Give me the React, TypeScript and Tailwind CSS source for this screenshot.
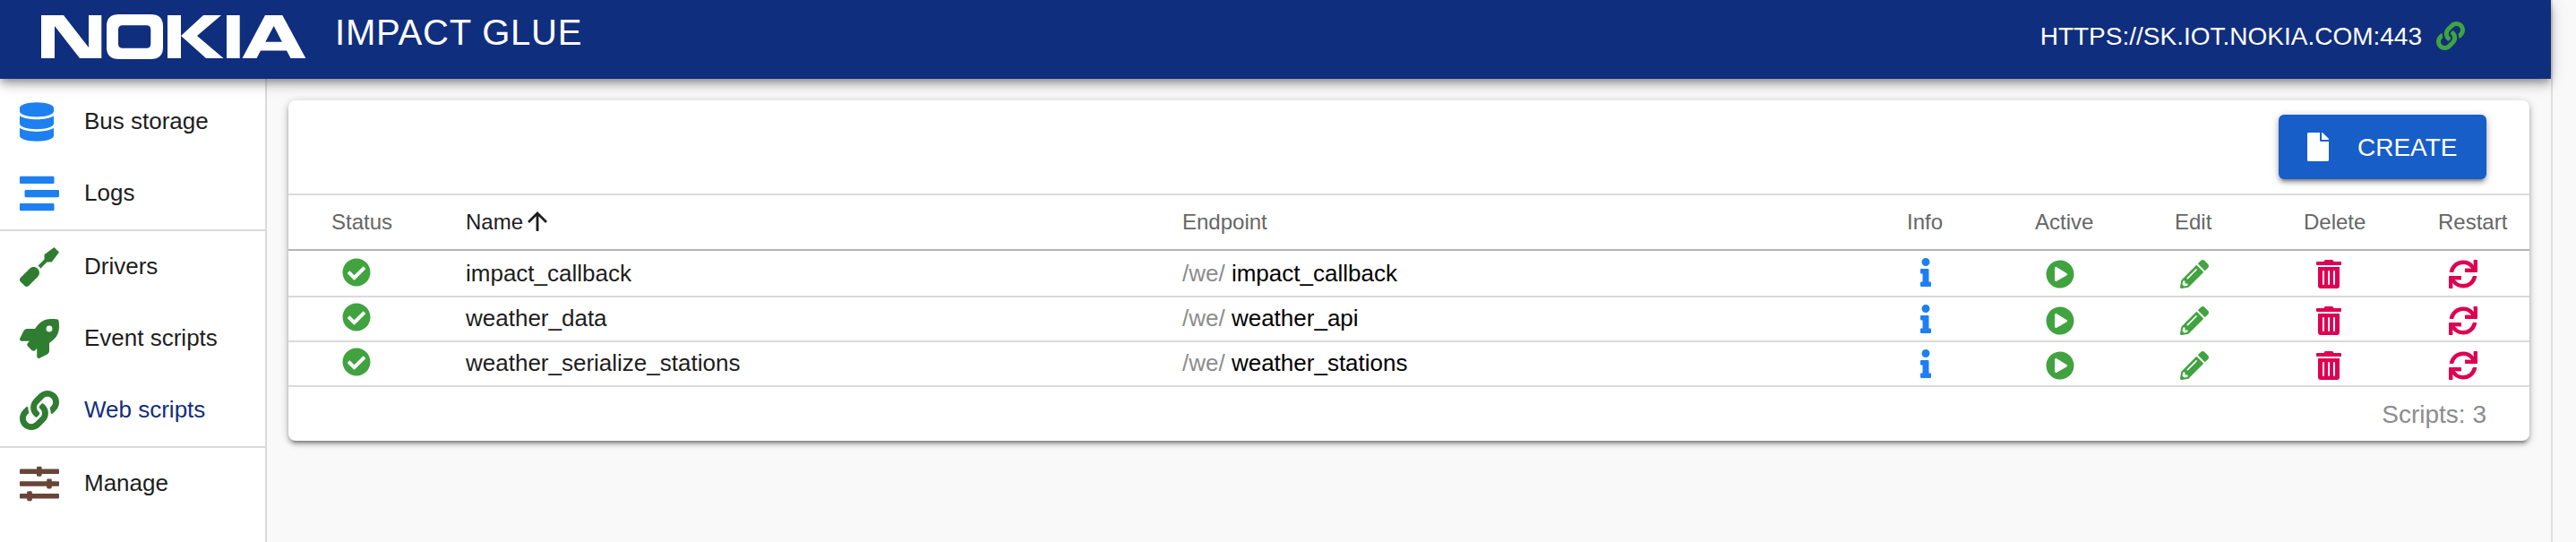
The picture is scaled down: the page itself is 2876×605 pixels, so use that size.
import { FaDatabase, FaStream, FaScrewdriver, FaRocket, FaLink, FaFile, FaCheckCircle, FaInfo, FaPlayCircle } from "react-icons/fa";

const pages = [
  [
    { label: "Bus storage", icon: FaDatabase, color: "text-[#1e80f0]", box: "w-[38px]" },
    { label: "Logs", icon: FaStream, color: "text-[#1e80f0]", box: "w-[44px]" },
  ],
  [
    { label: "Drivers", icon: FaScrewdriver, color: "text-[#2f7d30]", box: "w-[44px]" },
    { label: "Event scripts", icon: FaRocket, color: "text-[#2f7d30]", box: "w-[44px]" },
    { label: "Web scripts", icon: FaLink, color: "text-[#2f7d30]", box: "w-[44px]", active: true },
  ],
  [{ label: "Manage", icon: Sliders, color: "text-[#6a4438]", box: "w-[44px]" }],
];

const scripts = [
  { name: "impact_callback", endpoint: "impact_callback" },
  { name: "weather_data", endpoint: "weather_api" },
  { name: "weather_serialize_stations", endpoint: "weather_stations" },
];

function Sliders({ className }: { className?: string }) {
  return (
    <svg viewBox="0 0 44 44" fill="currentColor" className={className}>
      <rect x="0" y="5.5" width="44" height="5.5" rx="1" />
      <rect x="0" y="19.2" width="44" height="5.5" rx="1" />
      <rect x="0" y="33" width="44" height="5.5" rx="1" />
      <rect x="19" y="2.7" width="5.6" height="11" rx="1.4" />
      <rect x="30.2" y="16.4" width="5.6" height="11" rx="1.4" />
      <rect x="8.2" y="30.2" width="5.6" height="11" rx="1.4" />
    </svg>
  );
}

function Pencil() {
  return (
    <svg viewBox="0 0 512 512" fill="currentColor" className="size-8">
      <path d="M497.9 142.1l-46.1 46.1c-4.7 4.7-12.3 4.7-17 0l-111-111c-4.7-4.7-4.7-12.3 0-17l46.1-46.1c18.7-18.7 49.1-18.7 67.9 0l60.1 60.1c18.8 18.7 18.8 49.1 0 67.9zM284.2 99.8L21.6 362.4.4 483.9c-2.9 16.4 11.4 30.6 27.8 27.8l121.500-21.300 262.600-262.600c4.700-4.700 4.700-12.300 0-17l-111-111c-4.800-4.700-12.400-4.700-17.100 0zM124.100 339.900c-5.500-5.500-5.500-14.300 0-19.800l154-154c5.500-5.500 14.300-5.500 19.800 0s5.500 14.300 0 19.800l-154 154c-5.500 5.500-14.300 5.500-19.800 0zM88 424h48v36.300l-64.500 11.300-31.100-31.100L51.700 376H88v48z" />
    </svg>
  );
}

function Trash() {
  return (
    <svg viewBox="0 0 448 512" fill="currentColor" className="h-8 w-7">
      <path d="M32 464a48 48 0 0 0 48 48h288a48 48 0 0 0 48-48V128H32zm272-256a16 16 0 0 1 32 0v224a16 16 0 0 1-32 0zm-96 0a16 16 0 0 1 32 0v224a16 16 0 0 1-32 0zm-96 0a16 16 0 0 1 32 0v224a16 16 0 0 1-32 0zM432 32H312l-9.400-18.700A24 24 0 0 0 281.100 0H166.800a23.720 23.720 0 0 0-21.400 13.300L136 32H16A16 16 0 0 0 0 48v32a16 16 0 0 0 16 16h416a16 16 0 0 0 16-16V48a16 16 0 0 0-16-16z" />
    </svg>
  );
}

function Restart() {
  return (
    <svg viewBox="0 0 512 512" fill="currentColor" className="size-8">
      <path d="M440.650 12.570l4 82.770A247.160 247.160 0 0 0 255.830 8C134.730 8 33.910 94.920 12.290 209.820A12 12 0 0 0 24.090 224h49.050a12 12 0 0 0 11.670-9.260 175.910 175.910 0 0 1 317-56.940l-101.460-4.860a12 12 0 0 0-12.570 12v47.410a12 12 0 0 0 12 12H500a12 12 0 0 0 12-12V12a12 12 0 0 0-12-12h-47.370a12 12 0 0 0-11.980 12.570zM255.830 432a175.610 175.610 0 0 1-146-77.800l101.800 4.870a12 12 0 0 0 12.570-12v-47.400a12 12 0 0 0-12-12H12a12 12 0 0 0-12 12V500a12 12 0 0 0 12 12h47.350a12 12 0 0 0 12-12.600l-4.150-82.570A247.170 247.170 0 0 0 255.830 504c121.110 0 221.930-86.920 243.550-201.820a12 12 0 0 0-11.800-14.180h-49.050a12 12 0 0 0-11.670 9.260A175.860 175.860 0 0 1 255.830 432z" />
    </svg>
  );
}

function Logo() {
  return (
    <svg viewBox="0 0 296 50" fill="#fff" className="h-[50px] w-[296px]" role="img" aria-label="NOKIA">
      <path d="M0 1H25L53 37V1H67.300V49H43L15 13V49H0Z" />
      <path fillRule="evenodd" d="M87 0H122Q136 0 136 13V37Q136 50 122 50H87Q73 50 73 37V13Q73 0 87 0ZM91 12.300Q86 12.300 86 17V33Q86 37.700 91 37.700H117.500Q122.300 37.700 122.300 33V17Q122.300 12.300 117.500 12.300Z" />
      <path d="M141 1H156V49H141ZM181 1H201L174 24L203.500 49H184L156 24Z" />
      <path d="M207 1H221.700V49H207Z" />
      <path fillRule="evenodd" d="M250 1H269.300L295.300 49H278.500L274 40.600H245L240.500 49H224.500ZM259.700 13L250.300 30.700H268.900Z" />
    </svg>
  );
}

const columns = "grid grid-cols-[198px_800px_784px_150px_150px_150px_150px_120px]";

export default function App() {
  return (
    <div className="flex h-[605px] w-[2876px] overflow-hidden bg-[#f9f9f9] font-['Liberation_Sans',Arial,sans-serif] text-[#1d1d1d]">
      <div className="flex w-[2850px] flex-col border-r-2 border-[#e0e0e0]">
        <header className="relative z-10 flex h-[88px] shrink-0 bg-[#102e7e] pl-[46px] pr-[96px] text-white shadow-[0_4px_8px_-2px_rgba(0,0,0,0.3),0_8px_10px_rgba(0,0,0,0.16),0_2px_20px_rgba(0,0,0,0.12)]">
          <div className="pt-4">
            <Logo />
          </div>
          <h1 className="ml-8 mt-[14px] text-[40px] leading-[44px] tracking-[0.8px]">IMPACT GLUE</h1>
          <div className="ml-auto flex items-start">
            <span className="mt-[25px] text-[28px] leading-8">HTTPS://SK.IOT.NOKIA.COM:443</span>
            <FaLink className="ml-4 mt-6 size-8 text-[#41a33f]" />
          </div>
        </header>
        <div className="flex min-h-0 grow">
          <nav className="flex w-[298px] shrink-0 flex-col border-r-2 border-[#dadada] bg-white pt-2">
            {pages.map((group, i) => (
              <div key={i} className={i > 0 ? "border-t-2 border-[#dadada]" : ""}>
                {group.map((p) => (
                  <a key={p.label} className="flex h-20 items-center pl-[22px]">
                    <span className="flex w-[72px]">
                      <p.icon className={`${p.box} h-[44px] ${p.color}`} />
                    </span>
                    <span className={`pb-0.5 text-[26px] leading-8 ${p.active ? "text-[#102e7e]" : ""}`}>{p.label}</span>
                  </a>
                ))}
              </div>
            ))}
          </nav>
          <main className="grow p-6">
            <section className="h-[380px] w-[2502px] rounded-lg bg-white shadow-[0_2px_10px_rgba(0,0,0,0.24),0_4px_4px_rgba(0,0,0,0.2),0_6px_2px_-4px_rgba(0,0,0,0.2)]">
              <div className="flex h-[104px] items-start justify-end pr-12 pt-4">
                <button className="flex h-[72px] w-[232px] items-center rounded-md bg-[#175ec8] pl-8 text-white shadow-[0_2px_10px_rgba(0,0,0,0.24),0_4px_4px_rgba(0,0,0,0.2),0_6px_2px_-4px_rgba(0,0,0,0.2)]">
                  <FaFile className="h-8 w-6" />
                  <span className="ml-8 pt-0.5 text-[28px] leading-8">CREATE</span>
                </button>
              </div>
              <div className={`${columns} h-16 items-center border-y-2 border-t-[#dadada] border-b-[#b4b4b4] text-[24px] leading-8 text-[#666]`}>
                <span className="pl-12">Status</span>
                <span className="flex items-center text-[#1d1d1d]">
                  Name
                  <svg viewBox="0 0 24 22" className="mb-[3px] ml-1 h-[22px] w-6" fill="none" stroke="currentColor" strokeWidth="2.8">
                    <path d="M12 22V2M2 12L12 2l10 10" />
                  </svg>
                </span>
                <span>Endpoint</span>
                <span className="pl-[25px]">Info</span>
                <span className="pl-[18px]">Active</span>
                <span className="pl-6">Edit</span>
                <span className="pl-[18px]">Delete</span>
                <span className="pl-[18px]">Restart</span>
              </div>
              {scripts.map((s, i) => {
                const first = i === 0;
                const text = first ? "pt-[9px]" : "pt-[7px]";
                return (
                  <div key={s.name} className={`${columns} ${first ? "h-[52px]" : "h-[50px]"} items-start border-b-2 border-[#dadada] text-[26px] leading-8`}>
                    <span className={`pl-[60px] text-[#41a33f] ${first ? "pt-2" : "pt-1.5"}`}>
                      <FaCheckCircle className="size-8" />
                    </span>
                    <span className={text}>{s.name}</span>
                    <span className={`whitespace-pre text-black ${text}`}>
                      <span className="text-[#8c8c8c]">/we/</span> {s.endpoint}
                    </span>
                    <span className="pl-10 pt-2 text-[#1e80f0]"><FaInfo className="h-8 w-3" /></span>
                    <span className="pl-[30px] pt-2.5 text-[#41a33f]"><FaPlayCircle className="size-8" /></span>
                    <span className="pl-[30px] pt-2.5 text-[#41a33f]"><Pencil /></span>
                    <span className="pl-8 pt-2.5 text-[#de0052]"><Trash /></span>
                    <span className="pl-[30px] pt-2.5 text-[#de0052]"><Restart /></span>
                  </div>
                );
              })}
              <div className="flex h-[60px] items-center justify-end pr-12 pt-0.5 text-[28px] leading-8 text-[#8c8c8c]">Scripts: 3</div>
            </section>
          </main>
        </div>
      </div>
    </div>
  );
}
